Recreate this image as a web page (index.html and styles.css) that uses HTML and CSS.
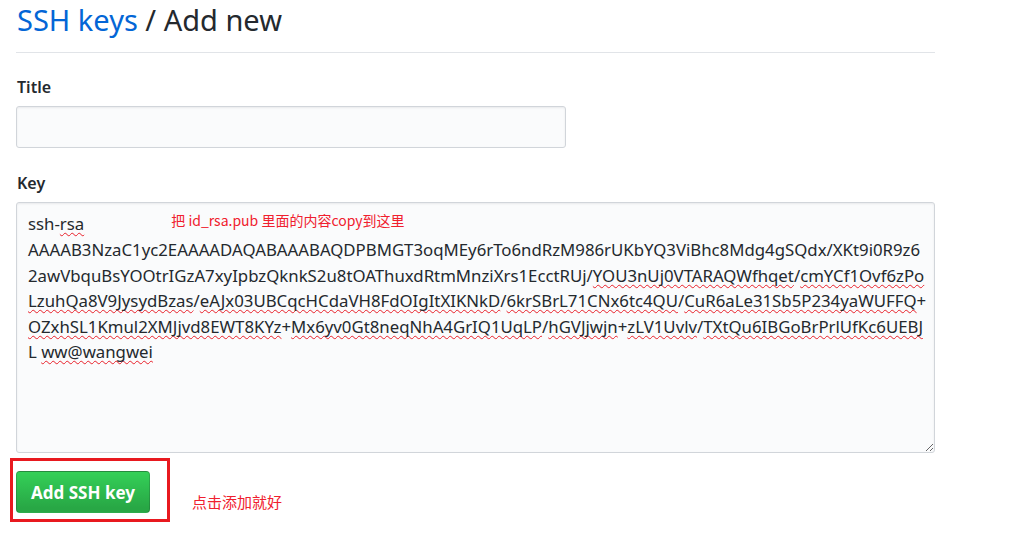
FILE: index.html
```html
<!DOCTYPE html>
<html lang="zh-CN">
<head>
<meta charset="utf-8">
<title>SSH keys / Add new</title>
<link rel="stylesheet" href="styles.css">
</head>
<body>
<div class="page">
  <div class="subhead">
    <h1 class="subhead-heading"><a class="crumb" href="#">SSH keys</a> / Add new</h1>
  </div>
  <form class="form">
    <div class="form-group">
      <label class="label">Title</label>
      <div class="input"></div>
    </div>
    <div class="form-group form-group-last">
      <label class="label">Key</label>
      <div class="textarea">
        <div class="line">ssh-<span class="sp">rsa</span><span class="note">把 id_rsa.pub 里面的内容copy到这里</span></div>
        <div class="line">AAAAB3NzaC1yc2EAAAADAQABAAABAQDPBMGT3oqMEy6rTo6ndRzM986rUKbYQ3ViBhc8Mdg4gSQdx/XKt9i0R9z6</div>
        <div class="line">2awVbquBsYOOtrIGzA7xyIpbzQknkS2u8tOAThuxdRtmMnziXrs1EcctRUj/<span class="sp">YOU3nUj0VTARAQWfhqet</span>/<span class="sp">cmYCf1Ovf6zPo</span></div>
        <div class="line"><span class="sp">LzuhQa8V9JysydBzas</span>/<span class="sp">eAJx03UBCqcHCdaVH8FdOIgItXIKNkD</span>/<span class="sp">6krSBrL71CNx6tc4QU</span>/<span class="sp">CuR6aLe31Sb5P234yaWUFFQ</span>+</div>
        <div class="line"><span class="sp">OZxhSL1Kmul2XMJjvd8EWT8KYz</span>+<span class="sp">Mx6yv0Gt8neqNhA4GrIQ1UqLP</span>/<span class="sp">hGVJjwjn</span>+<span class="sp">zLV1Uvlv</span>/<span class="sp">TXtQu6IBGoBrPrlUfKc6UEBJ</span></div>
        <div class="line">L <span class="sp">ww@wangwei</span></div>
      </div>
    </div>
    <div class="actions">
      <button type="button" class="btn-primary">Add SSH key</button>
      <span class="hint">点击添加就好</span>
      <span class="highlight-box"></span>
    </div>
  </form>
</div>
</body>
</html>
```
FILE: styles.css
```css
html, body {
  margin: 0;
  padding: 0;
  background: #fff;
}
html {
  min-height: 100%;
}
body {
  font-family: "Noto Sans", "Open Sans", "Noto Sans CJK SC", sans-serif;
  color: #24292e;
}
.page {
  width: 919px;
  padding-left: 16px;
  padding-bottom: 30px;
}
.subhead {
  border-bottom: 1px solid #e1e4e8;
  padding-bottom: 12px;
}
.subhead-heading {
  margin: 0;
  font-size: 29px;
  font-weight: 400;
  line-height: 40px;
  color: #24292e;
  padding-left: 1px;
}
.crumb {
  color: #0366d6;
  text-decoration: none;
}
.form {
  padding-top: 22px;
}
.form-group {
  margin-bottom: 23px;
}
.form-group-last {
  margin-bottom: 0;
}
.label {
  display: block;
  font-size: 16px;
  font-weight: 600;
  line-height: 24px;
  margin-bottom: 7px;
  padding-left: 1px;
}
.input {
  width: 548px;
  height: 40px;
  background: #fafbfc;
  border: 1px solid #d1d5da;
  border-radius: 3px;
  box-shadow: inset 0 1px 2px rgba(27, 31, 35, 0.075);
}
.textarea {
  box-sizing: border-box;
  width: 919px;
  height: 251px;
  background: #fafbfc;
  border: 1px solid #d1d5da;
  border-radius: 3px;
  padding: 8px 11px;
  resize: vertical;
  overflow: auto;
  font-size: 16.8px;
  line-height: 25.4px;
  box-shadow: inset 0 1px 2px rgba(27, 31, 35, 0.075);
}
.line {
  white-space: nowrap;
}
.sp {
  text-decoration: underline wavy #e8202a;
  text-decoration-thickness: 1px;
  text-underline-offset: 2px;
  text-decoration-skip-ink: none;
}
.note {
  font-family: "Noto Sans CJK SC", sans-serif;
  font-size: 14px;
  color: #f0202e;
  margin-left: 87px;
  position: relative;
  top: -4px;
}
.actions {
  position: relative;
  display: flex;
  align-items: flex-end;
  padding-top: 18px;
  padding-bottom: 12px;
  gap: 42px;
}
.btn-primary {
  width: 134px;
  height: 42px;
  border: 1px solid rgba(27, 31, 35, 0.2);
  border-radius: 4px;
  background: linear-gradient(#34d058, #28a745 90%);
  color: #fff;
  font-family: "Noto Sans", "Open Sans", sans-serif;
  font-size: 17px;
  font-weight: 700;
  padding: 0;
  cursor: pointer;
}
.hint {
  font-family: "Noto Sans CJK SC", sans-serif;
  font-size: 15px;
  color: #f0202e;
  line-height: 20px;
  margin-bottom: 1px;
}
.highlight-box {
  position: absolute;
  left: -6px;
  top: 5px;
  width: 154px;
  height: 58px;
  border: 3px solid #e8191f;
}
```
